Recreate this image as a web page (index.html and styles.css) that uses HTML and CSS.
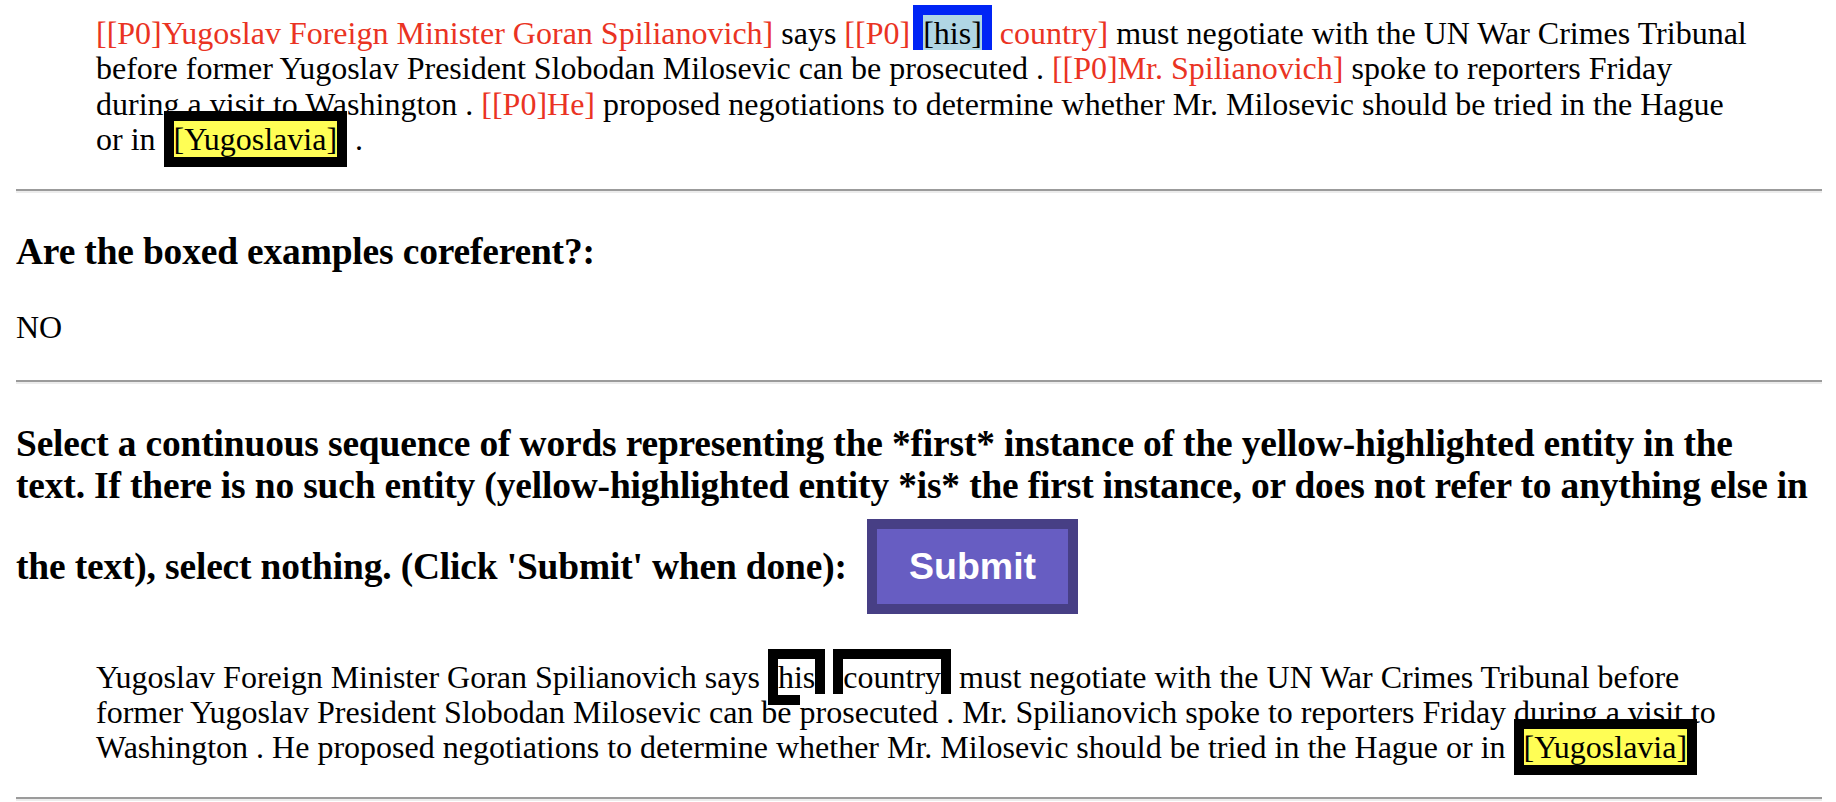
FILE: index.html
```html
<!DOCTYPE html>
<html>
<head>
<meta charset="utf-8">
<link rel="stylesheet" href="styles.css">
</head>
<body>
<div class="passage passage-top"><span class="ment">[[P0]Yugoslav Foreign Minister Goran Spilianovich]</span> says <span class="ment">[[P0]</span><span class="box-blue">[his]</span> <span class="ment">country]</span> must negotiate with the UN War Crimes Tribunal before former Yugoslav President Slobodan Milosevic can be <span class="tok">prosecuted</span> . <span class="ment">[[P0]Mr. Spilianovich]</span> spoke to reporters Friday during a visit to Washington . <span class="ment">[[P0]He]</span> proposed negotiations to determine whether Mr. Milosevic should be tried in the Hague or in <span class="box-black yellow">[Yugoslavia]</span> .</div>
<hr class="rule rule-first">
<h3 class="question">Are the boxed examples coreferent?:</h3>
<div class="answer">NO</div>
<hr class="rule">
<h3 class="question question-select">Select a continuous sequence of words representing the *first* instance of the yellow-highlighted entity in the<br>text. If there is no such entity (yellow-highlighted entity *is* the first instance, or does not refer to anything else in the text), select nothing. (Click 'Submit' when done): <button class="submit">Submit</button></h3>
<div class="passage passage-select">Yugoslav Foreign Minister Goran Spilianovich says <span class="box-black">his</span> <span class="box-black">country</span> must negotiate with the UN War Crimes Tribunal before former Yugoslav President Slobodan Milosevic can be <span class="tok">prosecuted .</span> Mr. Spilianovich spoke to reporters Friday during a visit to Washington . He proposed negotiations to determine whether Mr. Milosevic should be tried in the Hague or in <span class="box-black yellow">[Yugoslavia]</span></div>
<hr class="rule rule-last">
</body>
</html>
```
FILE: styles.css
```css
html, body {
  background: #ffffff;
}
body {
  margin: 0;
  padding: 0 6px 0 16px;
  font-family: "Liberation Serif", "Times New Roman", serif;
  font-size: 32px;
  color: #000000;
}
.passage {
  margin: 0 76px 0 80px;
  line-height: 35.3px;
}
.passage-top {
  padding-top: 16px;
}
.ment {
  color: #ea3323;
}
.tok {
  background: #ffffff;
}
.box-blue {
  margin-left: 3px;
  background: #b0d6e4;
  border: 10px solid #0024f5;
}
.box-black {
  border: 10px solid #000000;
}
.yellow {
  background: #fffe55;
}
.rule {
  height: 0;
  margin: 35px 8px 34px 0;
  border: 0;
  border-top: 2px solid #9b9b9b;
  border-bottom: 2px solid #ececec;
}
.rule-first {
  margin-top: 32px;
}
.question {
  margin: 37px 0 0;
  font-size: 37.44px;
  font-weight: bold;
  line-height: 43px;
  letter-spacing: -0.15px;
}
.answer {
  margin: 37px 0 0;
  line-height: 35.3px;
}
.question-select {
  margin-top: 39px;
  line-height: 42px;
  margin-bottom: 46px;
}
.submit {
  margin: 12px 0 0 11px;
  padding: 17px 32px;
  border: 10px solid #473f85;
  background: #675dc2;
  color: #ffffff;
  font-family: "Liberation Sans", Arial, sans-serif;
  font-size: 37.5px;
  font-weight: bold;
  line-height: 41px;
  letter-spacing: 0;
  vertical-align: baseline;
}
.passage-select {
  margin-top: 0;
  line-height: 35px;
}
.rule-last {
  margin-top: 32px;
}
```
